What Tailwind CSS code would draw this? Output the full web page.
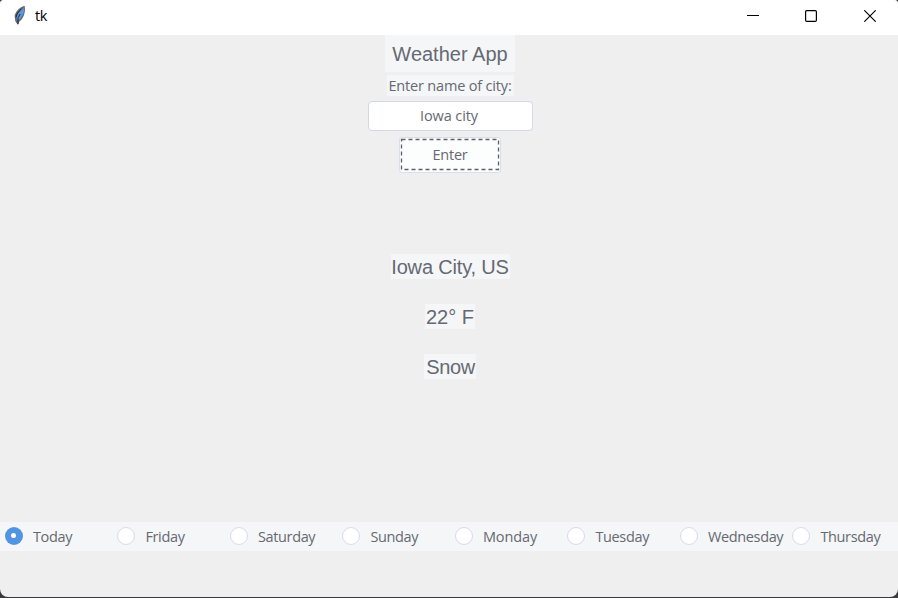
<!DOCTYPE html>
<html lang="en">
<head>
<meta charset="utf-8">
<title>tk</title>
<script src="https://cdn.jsdelivr.net/npm/@tailwindcss/browser@4"></script>
</head>
<body class="bg-[#3a3a3c] w-[898px] h-[598px] overflow-hidden font-['Open_Sans','Noto_Sans',sans-serif] text-[#666973]">
<div class="w-full h-[597px] rounded-t-[4px] rounded-b-[8px] bg-[#efefef] overflow-hidden flex flex-col">
  <header class="h-[35px] shrink-0 bg-white flex items-center text-black">
    <svg class="ml-3 mb-1.5 w-4 h-[22px] shrink-0" viewBox="0 0 16 22">
      <path d="M12.7 2C8.5 2.5 4.2 6.4 2.6 11.5L3.3 17.2L6 21L7 18C11 15.5 14 8.5 12.7 2Z" fill="#666b73"/>
      <path d="M12 4C9.2 5.8 5.2 9.6 4.2 13.7L5.9 16.8C10.1 13.2 12.7 8.5 12 4Z" fill="#5b97e2"/>
      <path d="M4 13.5C4.5 10 6.5 7.5 9.3 5M6 13.5V20M6.2 13.5L8.2 10" fill="none" stroke="#1b2536" stroke-width="1"/>
    </svg>
    <span class="ml-[7px] mb-[3px] text-[14.5px] leading-5 tracking-[-0.3px]">tk</span>
    <div class="ml-auto flex items-center mb-[3px] mr-[22px]">
      <svg class="w-3 h-3 mr-[46px]" viewBox="0 0 12 12"><path d="M0 5.5H12" stroke="#000"/></svg>
      <svg class="w-3 h-3 mr-[47px]" viewBox="0 0 12 12"><rect x=".6" y=".6" width="10.8" height="10.8" rx="1.2" fill="none" stroke="#000" stroke-width="1.2"/></svg>
      <svg class="w-3 h-3" viewBox="0 0 12 12"><path d="M.3 .3L11.7 11.7M11.7 .3L.3 11.7" stroke="#000" stroke-width="1.15"/></svg>
    </div>
  </header>
  <main class="flex-1 flex flex-col items-center pl-[2px] text-[14.5px]">
    <h1 class="w-[130px] h-[37px] bg-[#f5f6f7] text-center font-['Liberation_Sans',Arial,sans-serif] text-[20px] leading-[38px]">Weather App</h1>
    <label for="city" class="mt-[3px] w-[127px] h-[21px] bg-[#f5f6f7] text-center leading-[22px] whitespace-nowrap"><span class="tracking-[-0.17px]">Enter name of city:</span></label>
    <input id="city" value="Iowa city" class="mt-[5px] w-[165px] h-[30px] rounded-[4px] border border-[#d3d8e8] bg-white text-center leading-5 outline-none tracking-[-0.1px] pr-[2px] pb-[1px]">
    <button class="mt-[6px] w-[102px] h-[36px] rounded-[3px] border border-[#d9deeb] bg-[#fcfdfd] relative leading-[34px] tracking-[-0.2px]">Enter
      <svg class="absolute left-0 top-0 w-[100px] h-[34px]" viewBox="0 0 100 34"><rect x="1.5" y="1.5" width="97" height="30" fill="none" stroke="#5c616c" stroke-width="1.3" stroke-dasharray="4 3"/></svg>
    </button>
    <section class="mt-[81px] flex flex-col items-center gap-[25px] font-['Liberation_Sans',Arial,sans-serif] text-[20px] leading-[26px] whitespace-nowrap">
      <p class="w-[119px] h-[25px] bg-[#f5f6f7] text-center tracking-[-0.17px]">Iowa City, US</p>
      <p class="w-[50px] h-[25px] bg-[#f5f6f7] text-center">22° F</p>
      <p class="w-[52px] h-[25px] bg-[#f5f6f7] text-center tracking-[-0.35px] pl-px">Snow</p>
    </section>
  </main>
  <div class="h-[29px] mb-[46px] shrink-0 bg-[#f5f6f7] grid grid-cols-[repeat(8,112.5px)] items-center text-[14.5px] pl-[4.9px] pb-[2px] tracking-[-0.35px]">
    <label class="flex items-center gap-[10px]"><span class="size-[18px] rounded-full bg-[#5294e2] flex items-center justify-center"><i class="size-[5px] rounded-full bg-white"></i></span><span class="leading-5 pt-[2px]">Today</span></label>
    <label class="flex items-center gap-[10px]"><span class="size-[18px] rounded-full bg-white border border-[#d8dbea]"></span><span class="leading-5 pt-[2px]">Friday</span></label>
    <label class="flex items-center gap-[10px]"><span class="size-[18px] rounded-full bg-white border border-[#d8dbea]"></span><span class="leading-5 pt-[2px]">Saturday</span></label>
    <label class="flex items-center gap-[10px]"><span class="size-[18px] rounded-full bg-white border border-[#d8dbea]"></span><span class="leading-5 pt-[2px]">Sunday</span></label>
    <label class="flex items-center gap-[10px]"><span class="size-[18px] rounded-full bg-white border border-[#d8dbea]"></span><span class="leading-5 pt-[2px] tracking-[-0.1px]">Monday</span></label>
    <label class="flex items-center gap-[10px]"><span class="size-[18px] rounded-full bg-white border border-[#d8dbea]"></span><span class="leading-5 pt-[2px]">Tuesday</span></label>
    <label class="flex items-center gap-[10px]"><span class="size-[18px] rounded-full bg-white border border-[#d8dbea]"></span><span class="leading-5 pt-[2px]">Wednesday</span></label>
    <label class="flex items-center gap-[10px]"><span class="size-[18px] rounded-full bg-white border border-[#d8dbea]"></span><span class="leading-5 pt-[2px]">Thursday</span></label>
  </div>
</div>
</body>
</html>
